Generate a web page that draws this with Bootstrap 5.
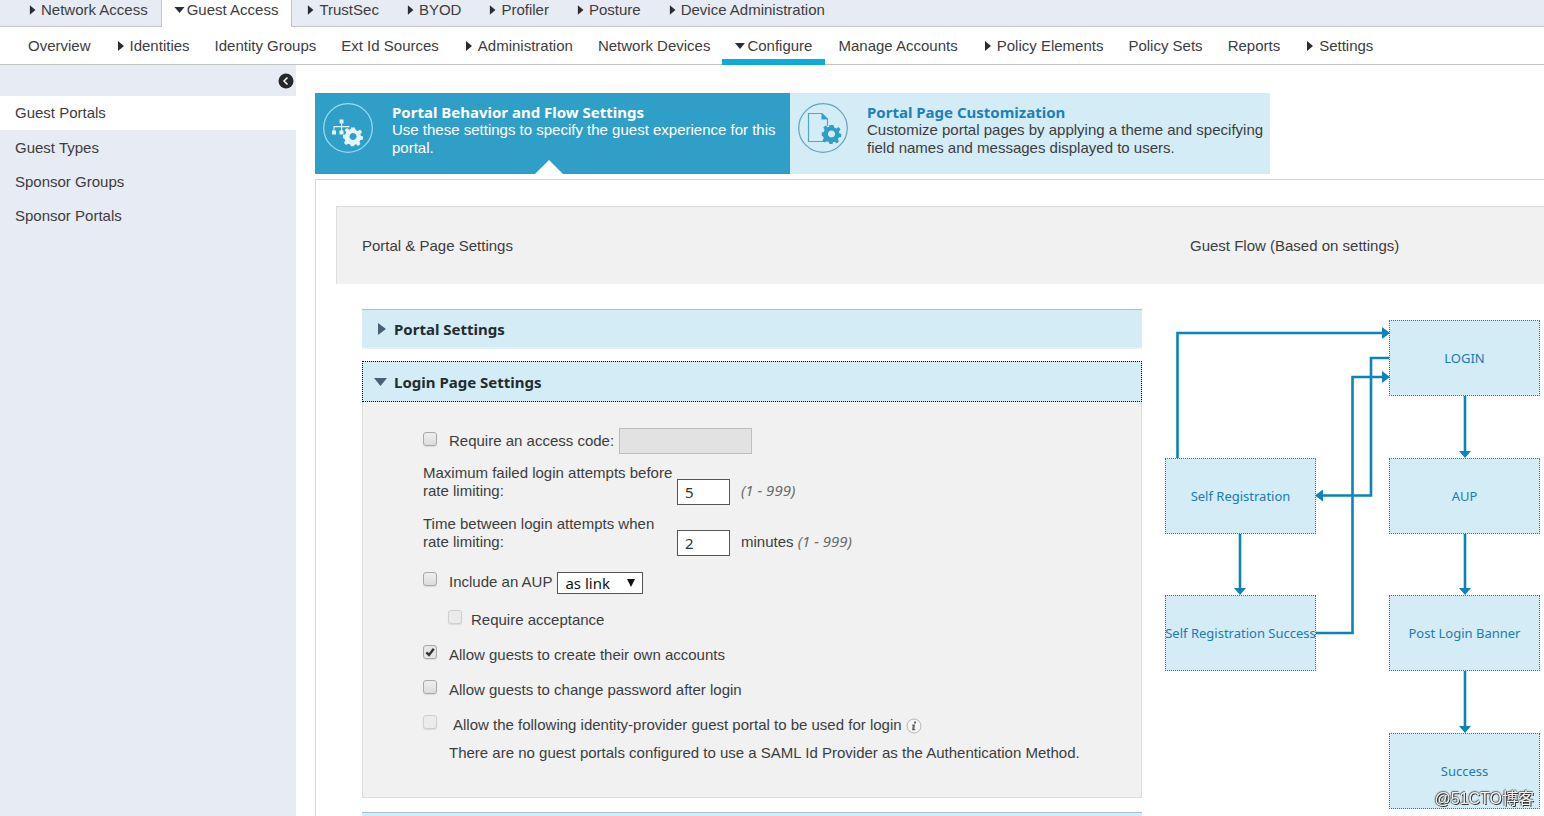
<!DOCTYPE html>
<html lang="en">
<head>
<meta charset="utf-8">
<meta name="viewport" content="width=device-width, initial-scale=1">
<title>Guest Portals</title>
<link rel="stylesheet" href="https://cdn.jsdelivr.net/npm/bootstrap@5.3.0/dist/css/bootstrap.min.css">
<style>
:root{--ink:#3c3d3f;--rail:#e7ebf3;--line:#c3c4c6;--sky:#d4ecf5;--flow:#0b84b9;--tahoma:"Noto Sans",sans-serif}
body{font:15px/18px "Liberation Sans",Arial,sans-serif;color:var(--ink);background:#fff}
.shell{height:100vh;overflow:hidden}
a{color:inherit;text-decoration:none}
.tri{flex:none;fill:#2b2c2f}

.top-bar{background:var(--rail);border-bottom:1px solid var(--line);padding-left:14px;height:27px}
.top-bar a{padding:0 13px 6px 14px;height:26px;white-space:nowrap;line-height:20px}
.top-bar a.current{background:#fff;border:solid var(--line);border-width:0 1px;height:27px;padding:0 13px 7px 12px}
.sub-bar{border-bottom:1px solid var(--line);padding-left:15px;height:38px}
.sub-bar a{padding:0 12px 0 13px;height:38px;white-space:nowrap}
.sub-bar a.current{border-bottom:6px solid #0eaad8;padding:6px 13px 0}

.rail{width:296px;background:var(--rail)}
.rail-head{height:31px;padding-right:2px}
.rail a{height:34px;padding-left:15px}
.rail a.current{background:#fff;margin-bottom:1px}

.work{padding:28px 0 0 19px;min-width:0}
.tab-card{flex:0 1 475px;border:0;text-align:left;padding:10px 4px 16px 8px;gap:19px;background:#2f9fc7;color:#fff;height:81px}
.tab-card.alt{flex-basis:480px;background:var(--sky);color:var(--ink)}
.tab-card strong{display:block;font:bold 15px/18px var(--tahoma)}
.tab-card.alt strong{color:#1d80b8}
.tab-card .notch{bottom:0;left:220px}

.sheet{margin-top:5px;border:solid #d6d6d6;border-width:1px 0 0 1px;padding:26px 0 0 20px}
.sheet-head{background:#f1f1f1;border:solid #dedede;border-width:1px 0 0 1px;height:78px}
.cols{padding:0 3px 0 25px;gap:23px}
.cols-body{padding-left:26px}
.cols-body>form{padding-top:1px;min-width:0}
.flow-col{flex:0 0 376px}
.flow-title{padding-left:25px}

.fold{height:40px;width:100%;border:0;border-top:1px solid #a6c3cf;border-bottom:2px solid #e3f1f6;background:var(--sky);font:bold 15px/20px var(--tahoma);color:#222b30;padding:0 15px;gap:6px;text-align:left}
.fold.open{border:1px dotted #000;height:41px;margin-top:12px;padding-left:11px;gap:7px}
.fold.next{margin-top:14px}
.fold svg{fill:#4a6075}
.fold-body{background:#f1f1f1;border:solid #dcdcdc;border-width:0 1px 1px;padding:26px 60px 35px}
.tick{appearance:none;width:14px;height:14px;border:1px solid #a9a9a9;border-radius:3px;background:linear-gradient(#efefef,#dcdcdc);margin:0;flex:none;box-shadow:0 1px 1px #00000018}
.tick:disabled{border-color:#cfcfcf;background:#ebebeb}
.tick:checked{background:url("data:image/svg+xml,%3Csvg xmlns='http://www.w3.org/2000/svg' viewBox='0 0 12 12'%3E%3Cpath d='M2.4 6.4 5 9 9.8 2.8' fill='none' stroke='%23333' stroke-width='2.4'/%3E%3C/svg%3E") #e6e6e6}
.opt{gap:12px;line-height:20px;margin-top:15px}
.opt:first-child{margin-top:0}
.limit+.opt,.opt.sub{margin-top:16px}
.opt label{white-space:nowrap}
.field{gap:5px}
.box{border:1px solid #555;background:#fff;height:26px;width:53px;padding:1px 7px;font:15px/20px var(--tahoma);color:#333}
.box.code{width:133px;background:#e2e2e2;border-color:#bdbdbd}
.pick{appearance:none;border:1px solid #555;border-radius:0;background:#fff;width:86px;height:22px;padding:0 7px;font:15px/20px var(--tahoma);color:#111}
.pick-wrap svg{right:8px;top:7px;pointer-events:none}
.limit{margin-top:10px;height:41px}
.limit label{width:254px}
.limit .box{align-self:end}
.limit>.hint,.unit{margin:16px 0 0 11px}
.hint{font:italic 15px/20px var(--tahoma);color:#6b6b6b}
.sub{margin-left:25px;gap:9px}
.idp label{margin:0 4px}
.idp svg{margin:3px 0 0 -12px}
.note{margin:9px 0 0 26px}

.canvas{height:490px;margin-top:36px}
.node{position:absolute;width:151px;height:76px;border:1px dotted var(--flow);background:var(--sky);color:#1b7bb3;font:13px/18px var(--tahoma);white-space:nowrap}
.c1{left:0}.c2{left:224px}
.r1{top:0}.r2{top:138px}.r3{top:275px}.r4{top:413px}
.stamp{right:10px;bottom:7px;font:16px/20px "Liberation Sans","Noto Sans CJK SC",sans-serif;color:#f4f4f4;text-shadow:1px 1px 0 #333,-1px 0 1px #555,0 -1px 1px #666}
</style>
</head>
<body>
<svg width="0" height="0" class="position-absolute" aria-hidden="true">
<symbol id="right" viewBox="0 0 14 10"><path d="M2 0 8 5 2 10z"/></symbol>
<symbol id="down" viewBox="0 0 12 10"><path d="M0 2h10L5 8z"/></symbol>
<symbol id="gear" viewBox="-10 -10 20 20"><path fill-rule="evenodd" d="M-2-9h4l.6 2.600 2.200.9L7-6.900 9.100-4.600 7.300-2.300l.6 1.600L10 0v3L7.400 3.400l-1 1.900L7.500 7.600 5.200 9.500 3 7.800 1.500 8.300 1 10h-3l-.7-2-2-.8-2.200 1.400-2.200-2.100 1.400-2.300-.7-1.700L-10 1.500v-3l2.200-.6.9-2L-8.200-6.400-6-8.400l2.200 1.600 1.400-.5zM0-3.600a3.600 3.600 0 1 0 .01 0z"/></symbol>
</svg>
<div class="shell d-flex flex-column">
<nav class="top-bar d-flex flex-shrink-0" aria-label="Work centers">
<a href="#" class="d-flex align-items-center"><svg class="tri" width="13" height="10"><use href="#right"/></svg>Network Access</a>
<a href="#" class="current d-flex align-items-center"><svg class="tri" width="13" height="10"><use href="#down"/></svg>Guest Access</a>
<a href="#" class="d-flex align-items-center"><svg class="tri" width="13" height="10"><use href="#right"/></svg>TrustSec</a>
<a href="#" class="d-flex align-items-center"><svg class="tri" width="13" height="10"><use href="#right"/></svg>BYOD</a>
<a href="#" class="d-flex align-items-center"><svg class="tri" width="13" height="10"><use href="#right"/></svg>Profiler</a>
<a href="#" class="d-flex align-items-center"><svg class="tri" width="13" height="10"><use href="#right"/></svg>Posture</a>
<a href="#" class="d-flex align-items-center"><svg class="tri" width="13" height="10"><use href="#right"/></svg>Device Administration</a>
</nav>
<nav class="sub-bar d-flex flex-shrink-0" aria-label="Guest Access">
<a href="#" class="d-flex align-items-center">Overview</a>
<a href="#" class="d-flex align-items-center"><svg class="tri" width="14" height="10"><use href="#right"/></svg>Identities</a>
<a href="#" class="d-flex align-items-center">Identity Groups</a>
<a href="#" class="d-flex align-items-center">Ext Id Sources</a>
<a href="#" class="d-flex align-items-center"><svg class="tri" width="14" height="10"><use href="#right"/></svg>Administration</a>
<a href="#" class="d-flex align-items-center">Network Devices</a>
<a href="#" class="current d-flex align-items-center"><svg class="tri" width="12" height="10"><use href="#down"/></svg>Configure</a>
<a href="#" class="d-flex align-items-center">Manage Accounts</a>
<a href="#" class="d-flex align-items-center"><svg class="tri" width="14" height="10"><use href="#right"/></svg>Policy Elements</a>
<a href="#" class="d-flex align-items-center">Policy Sets</a>
<a href="#" class="d-flex align-items-center">Reports</a>
<a href="#" class="d-flex align-items-center"><svg class="tri" width="14" height="10"><use href="#right"/></svg>Settings</a>
</nav>
<div class="d-flex flex-grow-1 overflow-hidden">
<aside class="rail flex-shrink-0">
<div class="rail-head d-flex align-items-center justify-content-end">
<button class="btn p-0 border-0 d-flex" aria-label="Collapse menu"><svg width="16" height="16" viewBox="0 0 16 16"><circle cx="8" cy="8" r="7.500" fill="#26272b"/><path d="M9.500 4.500 6 8l3.500 3.500" fill="none" stroke="#fff" stroke-width="1.500"/></svg></button>
</div>
<nav class="d-flex flex-column" aria-label="Configure">
<a href="#" class="current d-flex align-items-center">Guest Portals</a>
<a href="#" class="d-flex align-items-center">Guest Types</a>
<a href="#" class="d-flex align-items-center">Sponsor Groups</a>
<a href="#" class="d-flex align-items-center">Sponsor Portals</a>
</nav>
</aside>
<main class="work flex-grow-1">
<div class="d-flex">
<button class="tab-card position-relative d-flex align-items-start">
<svg class="flex-shrink-0" width="50" height="50" viewBox="0 0 50 50"><circle cx="25" cy="25" r="24.300" fill="none" stroke="#9bdcf0" stroke-width="1.200"/><g fill="#e4f6fc"><path d="M16.500 16.500h4v4h-4zM9 27.500h4v4H9zM16.500 27.500h4v4h-4z"/><path d="M18 20h1.200v8H18zM10.500 23h16v1.200h-15v4h-1z"/></g><use href="#gear" x="20" y="23.500" width="20" height="20" fill="#e4f6fc"/></svg>
<span><strong>Portal Behavior and Flow Settings</strong>Use these settings to specify the guest experience for this portal.</span>
<svg class="notch position-absolute" width="28" height="14"><path d="M0 14 14 0l14 14z" fill="#fff"/></svg>
</button>
<button class="tab-card alt d-flex align-items-start">
<svg class="flex-shrink-0" width="50" height="50" viewBox="0 0 50 50"><circle cx="25" cy="25" r="24.300" fill="none" stroke="#5fa5bf" stroke-width="1.200"/><path d="M26 38.500H10.500v-28H24l5.500 5.500v7M24 10.500V16h5.500" fill="none" stroke="#4da5c9" stroke-width="1.200"/><path d="M24 10.500V16h5.500z" fill="#2f9fc7"/><use href="#gear" x="23.500" y="21" width="20" height="20" fill="#2f9fc7"/></svg>
<span><strong>Portal Page Customization</strong>Customize portal pages by applying a theme and specifying field names and messages displayed to users.</span>
</button>
</div>
<section class="sheet">
<div class="sheet-head cols d-flex align-items-center">
<div class="flex-grow-1">Portal &amp; Page Settings</div>
<div class="flow-col flow-title">Guest Flow (Based on settings)</div>
</div>
<div class="cols cols-body d-flex align-items-start">
<form class="flex-grow-1 mt-4">
<button type="button" class="fold d-flex align-items-center"><svg width="11" height="12"><path d="M1 0 9 6 1 12z"/></svg>Portal Settings</button>
<button type="button" class="fold open d-flex align-items-center" aria-expanded="true"><svg width="13" height="10"><path d="M0 1h13L6.500 9z"/></svg>Login Page Settings</button>
<div class="fold-body">
<div class="opt d-flex"><input class="tick mt-1" type="checkbox" id="code"><div class="field d-flex align-items-center"><label for="code">Require an access code:</label><input class="box code" type="text" disabled aria-label="Access code"></div></div>
<div class="limit d-flex"><label for="tries">Maximum failed login attempts before rate limiting:</label><input class="box" id="tries" value="5"><span class="hint">(1 - 999)</span></div>
<div class="limit d-flex"><label for="wait">Time between login attempts when rate limiting:</label><input class="box" id="wait" value="2"><span class="unit">minutes <span class="hint">(1 - 999)</span></span></div>
<div class="opt d-flex"><input class="tick" type="checkbox" id="aup"><div class="field d-flex"><label for="aup">Include an AUP</label><div class="pick-wrap position-relative d-flex"><select class="pick" aria-label="AUP display"><option>as link</option></select><svg class="position-absolute" width="8" height="8"><path d="M0 0h8L4 8z" fill="#111"/></svg></div></div></div>
<div class="opt sub d-flex"><input class="tick" type="checkbox" id="acc" disabled><label for="acc">Require acceptance</label></div>
<div class="opt d-flex"><input class="tick" type="checkbox" id="own" checked><label for="own">Allow guests to create their own accounts</label></div>
<div class="opt d-flex"><input class="tick" type="checkbox" id="pwd"><label for="pwd">Allow guests to change password after login</label></div>
<div class="opt idp d-flex"><input class="tick" type="checkbox" id="idp" disabled><label for="idp">Allow the following identity-provider guest portal to be used for login</label><svg width="16" height="16" viewBox="0 0 16 16"><circle cx="8" cy="8" r="7" fill="#f6f6f6" stroke="#b5b5b5"/><path d="M8 3.500h2v2H8zM6.500 6.500H9L8.300 11h1v1.200H6l.7-4.500h-.8z" fill="#666"/></svg></div>
<div class="note">There are no guest portals configured to use a SAML Id Provider as the Authentication Method.</div>
</div>
<button type="button" class="fold next" aria-label="Next section"></button>
</form>
<div class="flow-col canvas position-relative">
<div class="node c2 r1 d-flex align-items-center justify-content-center">LOGIN</div>
<div class="node c1 r2 d-flex align-items-center justify-content-center">Self Registration</div>
<div class="node c2 r2 d-flex align-items-center justify-content-center">AUP</div>
<div class="node c1 r3 d-flex align-items-center justify-content-center">Self Registration Success</div>
<div class="node c2 r3 d-flex align-items-center justify-content-center">Post Login Banner</div>
<div class="node c2 r4 d-flex align-items-center justify-content-center">Success</div>
<svg class="position-absolute top-0 start-0" width="376" height="490" aria-hidden="true"><g fill="none" stroke="#0b84b9" stroke-width="2.600"><path d="M12.500 138V13H218M224 38h-18v137.500h-49M151 313h36.500V57H218M300 76v56M300 214v56M300 351v56M75 214v56"/></g><g fill="#0b84b9"><path d="M217 7v12l8-6zM217 51v12l8-6zM158 169.500v12l-8-6zM294 131h12l-6 7zM294 268h12l-6 7zM294 406h12l-6 7zM69 268h12l-6 7z"/></g></svg>
</div>
</div>
</section>
</main>
</div>
</div>
<div class="stamp position-fixed">@51CTO博客</div>
<script src="https://cdn.jsdelivr.net/npm/bootstrap@5.3.0/dist/js/bootstrap.bundle.min.js"></script>
</body>
</html>
